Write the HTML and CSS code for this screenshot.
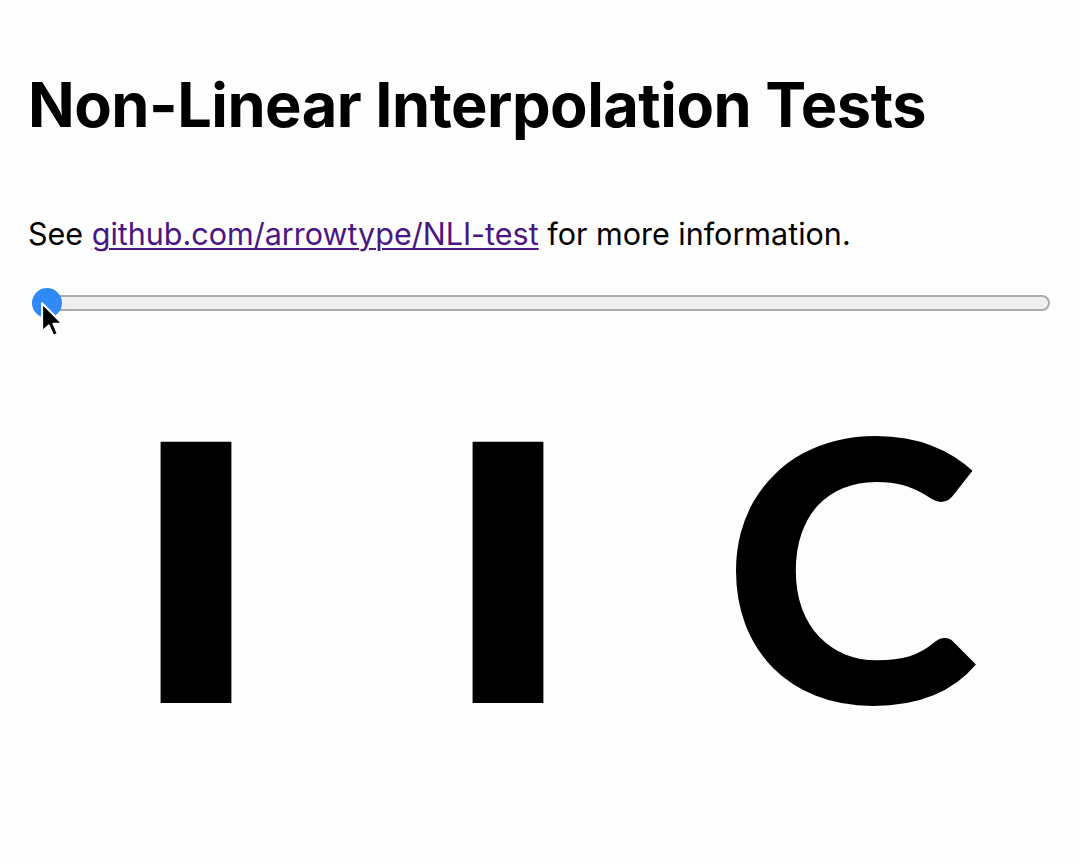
FILE: index.html
```html
<!DOCTYPE html>
<html lang="en">
<head>
<meta charset="utf-8">
<title>Non-Linear Interpolation Tests</title>
<link rel="stylesheet" href="styles.css">
</head>
<body>
<main class="page">
  <h1 class="title">Non-Linear Interpolation Tests</h1>
  <p class="intro">See <a class="link" href="#">github.com/arrowtype/NLI-test</a> for more information.</p>
  <div class="slider-wrap">
    <input class="slider" type="range" min="0" max="1000" value="0" aria-label="Interpolation">
    <svg class="cursor" width="24" height="36" viewBox="0 0 12 18" aria-hidden="true">
      <path d="M1 1 L1 14.5 L4.2 11.6 L6.4 16.6 L8.6 15.6 L6.5 10.8 L10.8 10.8 Z" fill="#000" stroke="#fff" stroke-width="1" stroke-linejoin="round"/>
    </svg>
  </div>
  <div class="specimen">
    <span class="glyph g1">I</span>
    <span class="glyph g2">I</span>
    <span class="glyph g3"><span class="round">C</span></span>
  </div>
</main>
</body>
</html>
```

FILE: styles.css
```css
html, body {
  margin: 0;
  padding: 0;
  background: #fefdfe;
}

.page {
  padding: 0 28px;
  font-family: Inter, "Liberation Sans", sans-serif;
  color: #000;
}

.title {
  margin: 0;
  padding-top: 67px;
  font-size: 61.3px;
  font-weight: 700;
  letter-spacing: -0.5px;
  line-height: 76px;
}

.intro {
  margin: 0;
  padding-top: 73px;
  font-size: 30.5px;
  line-height: 36px;
}

.link {
  color: #4a1682;
  text-decoration: underline;
  text-decoration-thickness: 2px;
  text-underline-offset: 3px;
}

.slider-wrap {
  position: relative;
  margin-top: 35px;
  height: 32px;
}

.slider {
  -webkit-appearance: none;
  appearance: none;
  display: block;
  width: 1018px;
  margin: 0 0 0 4px;
  height: 32px;
  background: transparent;
}

.slider::-webkit-slider-runnable-track {
  height: 16px;
  box-sizing: border-box;
  background: #efefef;
  border: 2px solid #ababab;
  border-radius: 8px;
}

.slider::-webkit-slider-thumb {
  -webkit-appearance: none;
  width: 30px;
  height: 30px;
  border-radius: 50%;
  background: #2f8af5;
  border: none;
  margin-top: -9px;
  margin-left: -2px;
}

.cursor {
  position: absolute;
  left: 12px;
  top: 14px;
  width: 25px;
  height: 38px;
}

.specimen {
  display: grid;
  grid-template-columns: 336px 288px 406px;
  align-items: baseline;
  margin-top: 44px;
  font-family: Inter, "Liberation Sans", sans-serif;
  font-weight: 900;
  font-size: 359px;
  line-height: 400px;
}

.glyph {
  text-align: center;
}

.round {
  display: inline-block;
  font-family: Lato, "Liberation Sans", sans-serif;
  font-size: 364px;
  transform: translateX(-4px) scaleX(1.07);
}
```
